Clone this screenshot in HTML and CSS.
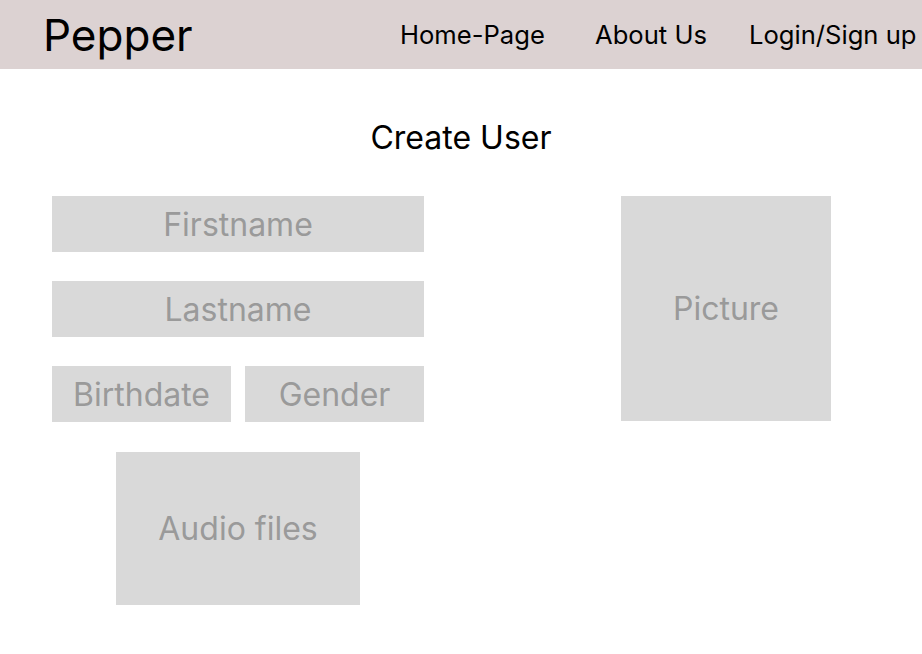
FILE: index.html
```html
<!DOCTYPE html>
<html>
<head>
<meta charset="utf-8">
<link rel="stylesheet" href="styles.css">
</head>
<body>
<header class="topbar">
  <div class="brand">Pepper</div>
  <nav class="nav">
    <a class="nav-home">Home-Page</a>
    <a class="nav-about">About Us</a>
    <a class="nav-login">Login/Sign up</a>
  </nav>
</header>
<main class="content">
  <h1 class="title">Create User</h1>
  <div class="form">
    <div class="left">
      <div class="field">Firstname</div>
      <div class="field">Lastname</div>
      <div class="row">
        <div class="field half">Birthdate</div>
        <div class="field half">Gender</div>
      </div>
      <div class="audio">Audio files</div>
    </div>
    <div class="picture">Picture</div>
  </div>
</main>
</body>
</html>
```
FILE: styles.css
```css
* { box-sizing: border-box; }
html, body { margin: 0; padding: 0; background: #fff; }
body { font-family: Inter, "Noto Sans", sans-serif; color: #000; width: 922px; height: 654px; overflow: hidden; }
.topbar {
  height: 69px;
  background: #dcd2d2;
  display: flex;
  align-items: center;
  padding-left: 43px;
}
.brand { font-size: 44px; line-height: 1; width: 150px; white-space: nowrap; margin-top: 0; }
.nav { display: flex; margin-left: 207px; font-size: 25.6px; }
.nav a { color: #000; text-decoration: none; white-space: nowrap; }
.nav-home { width: 143px; }
.nav-about { margin-left: 52px; width: 111px; }
.nav-login { margin-left: 43px; }
.content { padding-top: 53px; }
.title {
  margin: 0;
  font-weight: 400;
  font-size: 32px;
  line-height: 32px;
  text-align: center;
}
.form {
  display: flex;
  margin-top: 42px;
  padding-left: 52px;
}
.left { width: 372px; display: flex; flex-direction: column; }
.field {
  height: 56px;
  background: #d9d9d9;
  color: #9a9a9a;
  font-size: 32px;
  display: flex;
  align-items: center;
  justify-content: center;
  margin-bottom: 29px;
}
.row { display: flex; gap: 14px; }
.half { flex: 1; margin-bottom: 30px; }
.audio {
  width: 244px;
  height: 153px;
  margin-left: 64px;
  background: #d9d9d9;
  color: #9a9a9a;
  font-size: 32px;
  display: flex;
  align-items: center;
  justify-content: center;
}
.picture {
  margin-left: 197px;
  width: 210px;
  height: 225px;
  background: #d9d9d9;
  color: #9a9a9a;
  font-size: 32px;
  display: flex;
  align-items: center;
  justify-content: center;
}
```
